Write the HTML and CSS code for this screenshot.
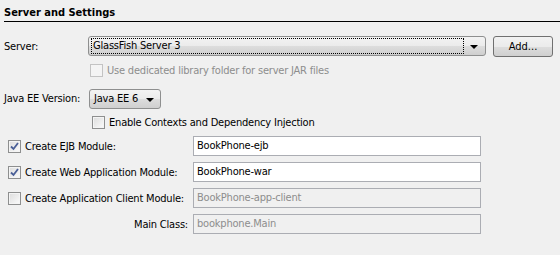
FILE: index.html
```html
<!DOCTYPE html>
<html lang="en">
<head>
  <meta charset="UTF-8">
  <title>Server and Settings</title>
  <link rel="stylesheet" href="styles.css">
</head>
<body>

<div class="panel">
  <h1 class="title">Server and Settings</h1>

  <div class="row server-row">
    <span class="label">Server:</span>
    <div class="combo server-combo">
      <span class="focus">GlassFish Server 3</span>
      <span class="arrow"></span>
    </div>
    <button class="btn">Add...</button>
  </div>

  <label class="check-row lib-row disabled">
    <span class="box"></span>
    <span>Use dedicated library folder for server JAR files</span>
  </label>

  <div class="row ee-row">
    <span class="label">Java EE Version:</span>
    <div class="combo ee-combo">
      <span class="value">Java EE 6</span>
      <span class="arrow"></span>
    </div>
  </div>

  <label class="check-row cdi-row">
    <span class="box"></span>
    <span>Enable Contexts and Dependency Injection</span>
  </label>

  <div class="modules">
    <label class="mod-label"><span class="box checked"></span>Create EJB Module:</label>
    <div class="field">BookPhone-ejb</div>

    <label class="mod-label"><span class="box checked"></span>Create Web Application Module:</label>
    <div class="field">BookPhone-war</div>

    <label class="mod-label"><span class="box"></span>Create Application Client Module:</label>
    <div class="field off">BookPhone-app-client</div>

    <span class="mod-label main">Main Class:</span>
    <div class="field off">bookphone.Main</div>
  </div>
</div>

</body>
</html>
```

FILE: styles.css
```css
body {
  margin: 0;
  background: #f0f0f0;
  color: #000;
  font-family: 'DejaVu Sans Condensed', 'DejaVu Sans', sans-serif;
  font-size: 11px;
  letter-spacing: -0.2px;
}
.panel {
  padding: 6px 0 0 4px;
}
.title {
  font-size: 11px;
  font-weight: bold;
  letter-spacing: 0;
  margin: 0;
  padding-bottom: 2px;
  line-height: 13px;
  border-bottom: 1px solid #000;
}
.row {
  display: flex;
  align-items: center;
}
.label {
  width: 84px;
}
.server-row {
  margin-top: 14px;
  height: 20px;
}
.combo {
  display: flex;
  align-items: center;
  box-sizing: border-box;
  height: 20px;
  border: 1px solid #8e8f8f;
  border-radius: 3px;
  background: linear-gradient(#f3f3f3, #ebebeb 50%, #dddddd 51%, #cfcfcf);
}
.server-combo {
  width: 398px;
  padding: 2px;
}
.focus {
  flex: 1;
  height: 14px;
  line-height: 14px;
  border: 1px dotted #000;
  padding-left: 1px;
}
.arrow {
  width: 0;
  height: 0;
  margin: 2px 5px 0 6px;
  border-left: 4px solid transparent;
  border-right: 4px solid transparent;
  border-top: 4px solid #000;
}
.btn {
  margin-left: 7px;
  width: 60px;
  height: 21px;
  font: inherit;
  color: #000;
  border: 1px solid #707070;
  border-radius: 3px;
  background: linear-gradient(#f2f2f2, #ebebeb 50%, #dddddd 51%, #cfcfcf);
}
.check-row {
  display: flex;
  align-items: center;
  gap: 4px;
  white-space: nowrap;
}
.lib-row {
  margin: 8px 0 0 86px;
}
.disabled {
  color: #8d8d8d;
}
.box {
  display: inline-block;
  box-sizing: border-box;
  width: 13px;
  height: 13px;
  border: 1px solid #8e8f8f;
  background: linear-gradient(135deg, #dcdcdc, #fbfbfb);
  box-shadow: inset 0 0 0 1px #f4f4f4;
  flex-shrink: 0;
}
.disabled .box {
  border-color: #c3c3c3;
  background: #f4f4f4;
}
.box.checked {
  background:
    url("data:image/svg+xml,%3Csvg xmlns='http://www.w3.org/2000/svg' width='11' height='11'%3E%3Cpath d='M2 5.5 L4.5 8 L9 2' fill='none' stroke='%234a5f97' stroke-width='1.8'/%3E%3C/svg%3E") center no-repeat,
    linear-gradient(135deg, #dcdcdc, #fbfbfb);
}
.ee-row {
  margin-top: 11px;
  height: 21px;
}
.ee-combo {
  width: 72px;
  margin-left: 1px;
  padding-left: 4px;
}
.ee-combo .value {
  flex: 1;
}
.ee-combo .arrow {
  margin: 2px 6px 0 6px;
}
.cdi-row {
  margin: 7px 0 0 88px;
}
.modules {
  display: grid;
  grid-template-columns: 189px 288px;
  grid-auto-rows: 20px;
  row-gap: 6px;
  align-items: center;
  margin-top: 7px;
}
.mod-label {
  display: flex;
  align-items: center;
  gap: 4px;
  padding-left: 4px;
  white-space: nowrap;
}
.mod-label.main {
  justify-content: flex-end;
  padding-right: 5px;
}
.field {
  box-sizing: border-box;
  height: 20px;
  line-height: 18px;
  padding-left: 3px;
  border: 1px solid #abadb3;
  background: #fff;
}
.field.off {
  background: #f0f0f0;
  color: #8d8d8d;
}
```
